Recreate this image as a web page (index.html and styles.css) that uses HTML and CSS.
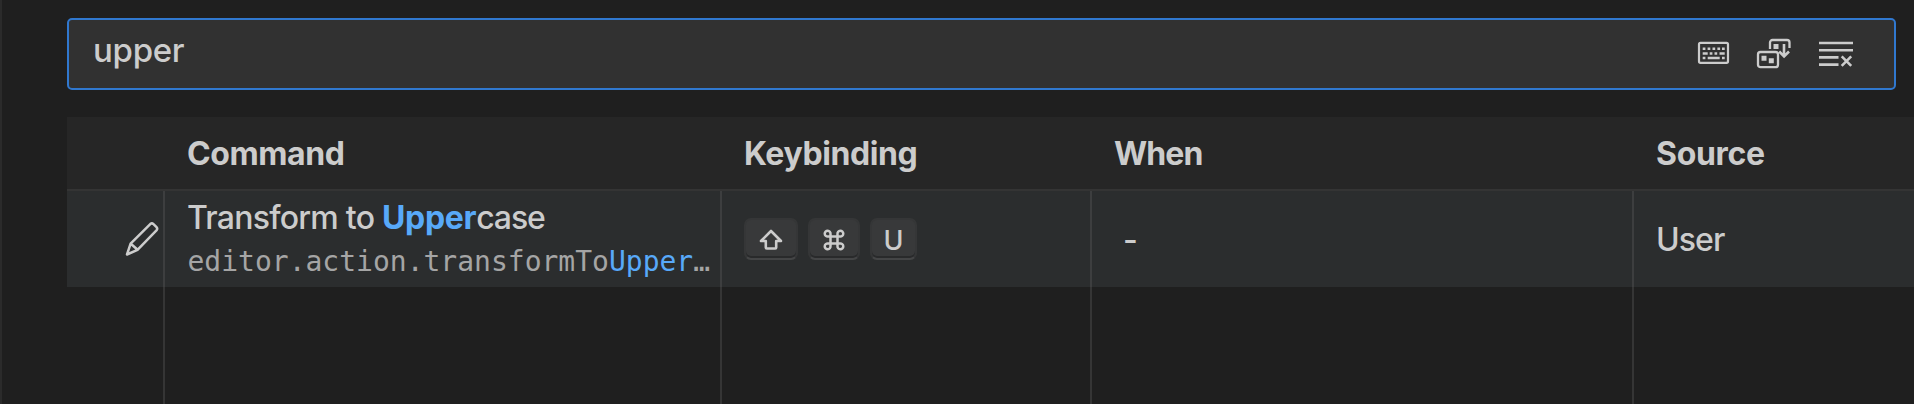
FILE: index.html
```html
<!DOCTYPE html>
<html lang="en">
<head>
<meta charset="utf-8">
<title>Keyboard Shortcuts</title>
<link rel="stylesheet" href="styles.css">
</head>
<body>
<main class="editor">
  <div class="search">
    <span class="search-text">upper</span>
    <div class="actions">
      <svg class="icon" width="36" height="32" viewBox="0 0 36 32" fill="none" stroke="#ccc" stroke-width="2.2">
        <rect x="4" y="5.800" width="29" height="20" rx="1.500"/>
        <path d="M7.700 11.800h2.700M12.600 11.800h2.700M17.500 11.800h2.700M22.400 11.800h2.700M27 11.800h2.700M7.700 16.400h5M14.700 16.400h2.700M19.500 16.400h2.700M24.500 16.400h5.200M7.700 21.100h2.700M12.700 21.100h12M27 21.100h2.700" stroke-width="2.500"/>
      </svg>
      <svg class="icon" width="38" height="32" viewBox="0 0 38 32" fill="none" stroke="#ccc" stroke-width="2.300">
        <path d="M15 12V5.500a2.500 2.500 0 0 1 2.500-2.500h14.500a2.500 2.500 0 0 1 2.500 2.500V11"/>
        <rect x="3" y="15" width="20" height="15.200" rx="2.500"/>
        <path d="M29 7v12M24.200 14.500l4.900 4.900 4.900-4.900" stroke-width="2.600"/>
        <path fill="#ccc" stroke="none" d="M18.500 7h5v5h-5zM6.500 18.700h5v5h-5zM13.800 21.200h5v5h-5z"/>
      </svg>
      <svg class="icon" width="38" height="32" viewBox="0 0 38 32" fill="none" stroke="#ccc" stroke-width="2.600">
        <path d="M2 6h34M2 13.200h34M2 20.400h19.500M2 27.600h19.500M24.700 19.300l9.500 9.500M34.200 19.300l-9.500 9.500"/>
      </svg>
    </div>
  </div>
  <div class="table">
    <div class="row head">
      <div class="cell tool"></div>
      <div class="cell"><span class="h-command">Command</span></div>
      <div class="cell"><span class="h-key">Keybinding</span></div>
      <div class="cell"><span class="h-when">When</span></div>
      <div class="cell"><span class="h-source">Source</span></div>
    </div>
    <div class="row item">
      <div class="cell tool">
        <svg width="38" height="38" viewBox="0 0 38 38" fill="none" stroke="#ccc" stroke-width="2.500" stroke-linejoin="round">
          <path d="M4 34.500l3.600-10.800L27.500 3.800q1.500-1 3 0.300l3 3q1.300 1.500 0.200 3L14.500 29.800zM7.800 23.800l6.800 6"/>
        </svg>
      </div>
      <div class="cell command">
        <div class="label"><span class="l-a">Transform to </span><b>Upper</b><span class="l-c">case</span></div>
        <div class="id">editor.action.transformTo<span class="match">Upper</span>…</div>
      </div>
      <div class="cell keys">
        <kbd class="k-shift"><svg width="24" height="22" viewBox="0 0 24 22" fill="none" stroke="#ccc" stroke-width="2.600" stroke-linejoin="round"><path d="M12 2L2 12h4.800v6.500q0 1 1 1h8.400q1 0 1-1V12H22z"/></svg></kbd>
        <kbd class="k-cmd"><svg width="22" height="22" viewBox="0 0 22 22" fill="none" stroke="#ccc" stroke-width="2.500"><path d="M7.500 7.500H5A2.900 2.900 0 1 1 7.500 5V17A2.900 2.900 0 1 1 5 14.500H17A2.900 2.900 0 1 1 14.500 17V5A2.900 2.900 0 1 1 17 7.500z"/></svg></kbd>
        <kbd class="k-u">U</kbd>
      </div>
      <div class="cell when">-</div>
      <div class="cell"><span class="source">User</span></div>
    </div>
    <div class="row rest">
      <div class="cell tool"></div><div class="cell"></div><div class="cell"></div><div class="cell"></div><div class="cell"></div>
    </div>
  </div>
</main>
</body>
</html>
```
FILE: styles.css
```css
* { box-sizing: border-box; }
body { margin: 0; background: #1f1f1f; color: #ccc; font: 450 32px/44px Inter, "Liberation Sans", sans-serif; }
.editor { height: 404px; border-left: 2px solid #2b2b2b; padding: 18px 0 0 65px; display: flex; flex-direction: column; overflow: hidden; }
.search { height: 72px; margin-right: 18px; flex: none; border: 2px solid #3078cf; border-radius: 5px; background: #313131; display: flex; justify-content: space-between; padding: 8px 39px 0 24px; }
.search-text { font-size: 33px; letter-spacing: -0.3px; height: 44px; }
.actions { display: flex; gap: 24px; padding-top: 9px; }
.icon { display: block; }
.table { margin-top: 27px; flex: 1; display: flex; flex-direction: column; }
.row { display: grid; grid-template-columns: 98px 557px 370px 542px 1fr; }
.cell { border-right: 2px solid #3d3e3f; padding-left: 22px; display: flex; align-items: center; white-space: nowrap; overflow: hidden; }
.cell:last-child { border-right: 0; }
.head { height: 74px; background: #262626; border-bottom: 2px solid #343434; font-weight: 700; }
.head .cell { border-color: transparent; padding-top: 1px; }
.h-command, .h-key { letter-spacing: -0.4px; }
.h-when { letter-spacing: -0.9px; }
.h-source { letter-spacing: -0.3px; }
.item { height: 96px; background: #2b2d2e; }
.rest { flex: 1; }
.rest .cell { border-color: #353535; }
.tool { justify-content: flex-end; padding: 0 2px 0 0; }
.command { display: block; padding-right: 8px; }
.label { height: 44px; padding-top: 5px; }
.label b { letter-spacing: -0.35px; }
.label b, .match { color: #58a9f9; }
.l-a { letter-spacing: -0.75px; white-space: pre; }
.l-c { letter-spacing: -1.1px; }
.id { height: 44px; padding: 5px 0 0 0.5px; font: 28px/44px "DejaVu Sans Mono", monospace; color: #a5a5a5; }
.keys { gap: 10px; align-items: flex-start; padding-top: 27px; }
kbd { height: 42px; border: 2px solid #353637; border-bottom-color: #444546; border-radius: 7px; background: #38393a; box-shadow: inset 0 -2px 0 #292a2b; display: flex; align-items: center; justify-content: center; font: 450 27px/40px Inter, sans-serif; }
kbd svg { margin-top: 2px; }
.k-shift { width: 54px; }
.k-cmd { width: 52px; }
.k-u { width: 47px; padding-top: 3px; }
.when { padding-left: 31px; padding-top: 1px; }
.source { letter-spacing: -0.9px; padding-top: 2px; }
```
